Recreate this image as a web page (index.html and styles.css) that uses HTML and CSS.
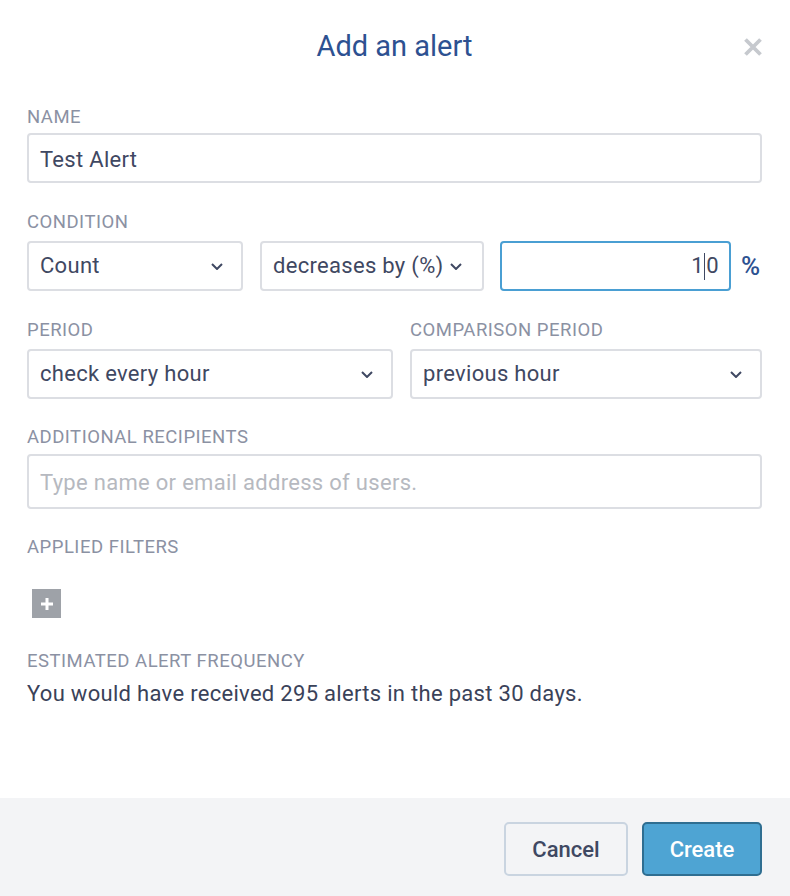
FILE: index.html
```html
<!DOCTYPE html>
<html lang="en">
<head>
<meta charset="utf-8">
<title>Add an alert</title>
<link rel="stylesheet" href="styles.css">
</head>
<body>
<div class="modal">
  <div class="main">
    <div class="header">
      <h1 class="title">Add an alert</h1>
      <button class="close" aria-label="Close">
        <svg width="20" height="20" viewBox="0 0 20 20"><path d="M2.5 2.5 L17.5 17.5 M17.5 2.5 L2.5 17.5" stroke="#c6c9ce" stroke-width="3.8" stroke-linecap="butt" fill="none"/></svg>
      </button>
    </div>

    <div class="field f-name">
      <div class="label">NAME</div>
      <div class="control name-input">Test Alert</div>
    </div>

    <div class="field f-cond">
      <div class="label">CONDITION</div>
      <div class="cond-row">
        <div class="control select w1">Count<svg class="chev" width="12" height="7" viewBox="0 0 12 7"><path d="M1 1 L6 6 L11 1" stroke="#3f4862" stroke-width="2" fill="none"/></svg></div>
        <div class="control select w2 tight">decreases by (%)<svg class="chev" width="12" height="7" viewBox="0 0 12 7"><path d="M1 1 L6 6 L11 1" stroke="#3f4862" stroke-width="2" fill="none"/></svg></div>
        <div class="control focus w3">1<span class="caret"></span>0</div>
        <div class="pct">%</div>
      </div>
    </div>

    <div class="period-row">
      <div class="field">
        <div class="label">PERIOD</div>
        <div class="control select">check every hour<svg class="chev" width="12" height="7" viewBox="0 0 12 7"><path d="M1 1 L6 6 L11 1" stroke="#3f4862" stroke-width="2" fill="none"/></svg></div>
      </div>
      <div class="field">
        <div class="label">COMPARISON PERIOD</div>
        <div class="control select">previous hour<svg class="chev" width="12" height="7" viewBox="0 0 12 7"><path d="M1 1 L6 6 L11 1" stroke="#3f4862" stroke-width="2" fill="none"/></svg></div>
      </div>
    </div>

    <div class="field f-recip">
      <div class="label">ADDITIONAL RECIPIENTS</div>
      <div class="control tall placeholder">Type name or email address of users.</div>
    </div>

    <div class="field f-filters">
      <div class="label">APPLIED FILTERS</div>
      <button class="add" aria-label="Add filter">
        <svg width="14" height="14" viewBox="0 0 14 14"><path d="M7 1 V13 M1 7 H13" stroke="#ffffff" stroke-width="3" fill="none"/></svg>
      </button>
    </div>

    <div class="field f-est">
      <div class="label">ESTIMATED ALERT FREQUENCY</div>
      <p class="estimate">You would have received 295 alerts in the past 30 days.</p>
    </div>
  </div>

  <div class="footer">
    <button class="btn cancel">Cancel</button>
    <button class="btn create">Create</button>
  </div>
</div>
</body>
</html>
```

FILE: styles.css
```css
* { box-sizing: border-box; }

html, body {
  margin: 0;
  padding: 0;
  background: #ffffff;
}

body {
  font-family: Roboto, "Liberation Sans", Arial, sans-serif;
  color: #3f4862;
}

.modal {
  width: 790px;
  height: 896px;
  display: flex;
  flex-direction: column;
}

.main {
  flex: 1;
  padding: 0 28px 0 27px;
}

.header {
  position: relative;
  height: 106px;
  padding-top: 29px;
  text-align: center;
}

.title {
  margin: 0;
  font-size: 29px;
  line-height: 34px;
  font-weight: 400;
  color: #2d5191;
}

.close {
  position: absolute;
  top: 37px;
  right: -1px;
  width: 20px;
  height: 20px;
  padding: 0;
  border: 0;
  background: none;
  display: block;
}
.close svg { display: block; }

.label {
  font-size: 18.5px;
  letter-spacing: 0.5px;
  line-height: 22px;
  color: #8b91a3;
  white-space: nowrap;
}

.control {
  height: 50px;
  border: 2px solid #dcdee3;
  border-radius: 4px;
  padding: 0 11px;
  font-size: 22px;
  letter-spacing: 0.3px;
  line-height: 46px;
  color: #3f4862;
  white-space: nowrap;
  overflow: hidden;
  display: flex;
  align-items: center;
}

.name-input { padding-top: 3px; }

.select {
  justify-content: space-between;
  padding-right: 18px;
}
.select.tight { padding-right: 20px; }

.chev { display: block; flex: none; }

.f-name .label { margin-bottom: 5px; }

.f-cond { margin-top: 28px; }
.f-cond .label { margin-bottom: 8px; }

.cond-row {
  display: flex;
  align-items: center;
}
.w1 { width: 216px; margin-right: 17px; }
.w2 { width: 224px; margin-right: 16px; }
.w3 { width: 231px; margin-right: 10px; }

.focus {
  border-color: #4a9fd3;
  justify-content: flex-end;
  padding-right: 10px;
}

.caret {
  display: inline-block;
  width: 1.5px;
  height: 27px;
  background: #3f4862;
  margin: 0 1px 0 0;
}

.pct {
  font-size: 26px;
  font-weight: 500;
  color: #2d5191;
  line-height: 50px;
}

.period-row {
  margin-top: 28px;
  display: grid;
  grid-template-columns: 366px 1fr;
  column-gap: 17px;
}
.period-row .label { margin-bottom: 8px; }

.f-recip { margin-top: 27px; }
.f-recip .label { margin-bottom: 6px; }
.tall { height: 55px; padding-top: 3px; }
.placeholder { color: #b6b9c0; }

.f-filters { margin-top: 27px; }
.add {
  display: flex;
  align-items: center;
  justify-content: center;
  margin: 31px 0 0 5px;
  width: 29px;
  height: 29px;
  padding: 0;
  border: 0;
  background: #9ea2a8;
}
.add svg { display: block; }

.f-est { margin-top: 32px; }
.estimate {
  margin: 8px 0 0;
  font-size: 22px;
  letter-spacing: 0.3px;
  line-height: 28px;
  color: #3a4259;
}

.footer {
  height: 98px;
  background: #f3f4f6;
  display: flex;
  justify-content: flex-end;
  align-items: flex-start;
  padding: 24px 28px 0 0;
  gap: 14px;
}

.btn {
  height: 54px;
  border-radius: 5px;
  font-family: Roboto, "Liberation Sans", Arial, sans-serif;
  font-size: 22px;
  font-weight: 500;
  padding: 0;
}

.cancel {
  width: 124px;
  border: 2px solid #c9d4e0;
  background: #f3f4f6;
  color: #3f4862;
}

.create {
  width: 120px;
  border: 2px solid #2f6e91;
  background: #4ea4d3;
  color: #ffffff;
}
```
